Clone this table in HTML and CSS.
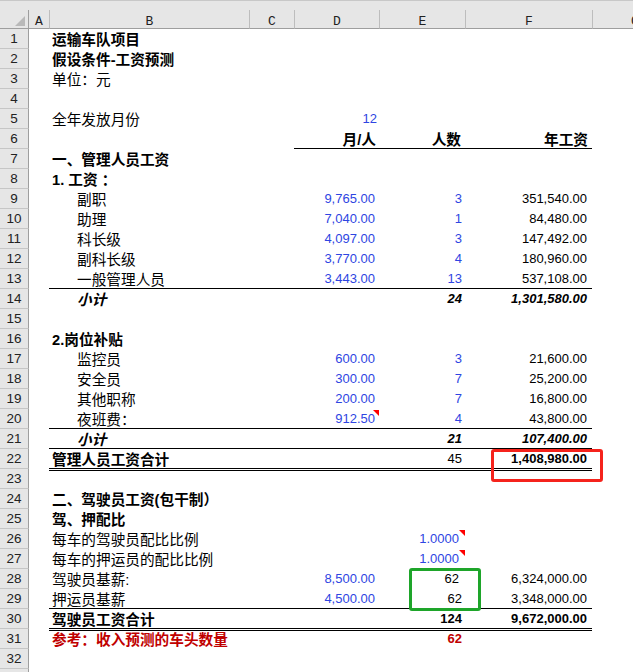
FILE: index.html
```html
<!DOCTYPE html>
<html lang="zh-CN">
<head>
<meta charset="utf-8">
<title>运输车队项目 - 工资预测</title>
<link rel="stylesheet" href="styles.css">
</head>
<body>
<div class="sheet">
  <div class="topstrip"></div>
  <div class="colhead">
    <div class="corner"><span class="tri"></span></div>
    <div class="ch">A</div>
    <div class="ch">B</div>
    <div class="ch">C</div>
    <div class="ch">D</div>
    <div class="ch">E</div>
    <div class="ch">F</div>
    <div class="ch">G</div>
  </div>
  <div class="grid">
    <div class="row"><div class="rh">1</div><div class="c"></div><div class="c b bold">运输车队项目</div><div class="c"></div><div class="c"></div><div class="c"></div><div class="c"></div><div class="c"></div></div>
    <div class="row"><div class="rh">2</div><div class="c"></div><div class="c b bold">假设条件-工资预测</div><div class="c"></div><div class="c"></div><div class="c"></div><div class="c"></div><div class="c"></div></div>
    <div class="row"><div class="rh">3</div><div class="c"></div><div class="c b">单位：元</div><div class="c"></div><div class="c"></div><div class="c"></div><div class="c"></div><div class="c"></div></div>
    <div class="row"><div class="rh">4</div><div class="c"></div><div class="c b"></div><div class="c"></div><div class="c"></div><div class="c"></div><div class="c"></div><div class="c"></div></div>
    <div class="row"><div class="rh">5</div><div class="c"></div><div class="c b">全年发放月份</div><div class="c"></div><div class="c d num blue gen">12</div><div class="c"></div><div class="c"></div><div class="c"></div></div>
    <div class="row"><div class="rh">6</div><div class="c"></div><div class="c b"></div><div class="c"></div><div class="c d hd u">月/人</div><div class="c e hd u">人数</div><div class="c f hd u">年工资</div><div class="c"></div></div>
    <div class="row"><div class="rh">7</div><div class="c"></div><div class="c b bold">一、管理人员工资</div><div class="c"></div><div class="c"></div><div class="c"></div><div class="c"></div><div class="c"></div></div>
    <div class="row"><div class="rh">8</div><div class="c"></div><div class="c b bold">1. 工资 ：</div><div class="c"></div><div class="c"></div><div class="c"></div><div class="c"></div><div class="c"></div></div>
    <div class="row"><div class="rh">9</div><div class="c"></div><div class="c b ind">副职</div><div class="c"></div><div class="c d num blue">9,765.00</div><div class="c e num blue">3</div><div class="c f num">351,540.00</div><div class="c"></div></div>
    <div class="row"><div class="rh">10</div><div class="c"></div><div class="c b ind">助理</div><div class="c"></div><div class="c d num blue">7,040.00</div><div class="c e num blue">1</div><div class="c f num">84,480.00</div><div class="c"></div></div>
    <div class="row"><div class="rh">11</div><div class="c"></div><div class="c b ind">科长级</div><div class="c"></div><div class="c d num blue">4,097.00</div><div class="c e num blue">3</div><div class="c f num">147,492.00</div><div class="c"></div></div>
    <div class="row"><div class="rh">12</div><div class="c"></div><div class="c b ind">副科长级</div><div class="c"></div><div class="c d num blue">3,770.00</div><div class="c e num blue">4</div><div class="c f num">180,960.00</div><div class="c"></div></div>
    <div class="row"><div class="rh">13</div><div class="c"></div><div class="c b ind u">一般管理人员</div><div class="c u"></div><div class="c d num blue u">3,443.00</div><div class="c e num blue u">13</div><div class="c f num u">537,108.00</div><div class="c"></div></div>
    <div class="row"><div class="rh">14</div><div class="c"></div><div class="c b ind bold it">小计</div><div class="c"></div><div class="c d"></div><div class="c e num bold it">24</div><div class="c f num bold it">1,301,580.00</div><div class="c"></div></div>
    <div class="row"><div class="rh">15</div><div class="c"></div><div class="c b"></div><div class="c"></div><div class="c"></div><div class="c"></div><div class="c"></div><div class="c"></div></div>
    <div class="row"><div class="rh">16</div><div class="c"></div><div class="c b bold">2.岗位补贴</div><div class="c"></div><div class="c"></div><div class="c"></div><div class="c"></div><div class="c"></div></div>
    <div class="row"><div class="rh">17</div><div class="c"></div><div class="c b ind">监控员</div><div class="c"></div><div class="c d num blue">600.00</div><div class="c e num blue">3</div><div class="c f num">21,600.00</div><div class="c"></div></div>
    <div class="row"><div class="rh">18</div><div class="c"></div><div class="c b ind">安全员</div><div class="c"></div><div class="c d num blue">300.00</div><div class="c e num blue">7</div><div class="c f num">25,200.00</div><div class="c"></div></div>
    <div class="row"><div class="rh">19</div><div class="c"></div><div class="c b ind">其他职称</div><div class="c"></div><div class="c d num blue">200.00</div><div class="c e num blue">7</div><div class="c f num">16,800.00</div><div class="c"></div></div>
    <div class="row"><div class="rh">20</div><div class="c"></div><div class="c b ind u">夜班费：</div><div class="c u"></div><div class="c d num blue u note">912.50</div><div class="c e num blue u">4</div><div class="c f num u">43,800.00</div><div class="c"></div></div>
    <div class="row"><div class="rh">21</div><div class="c"></div><div class="c b ind bold it u">小计</div><div class="c u"></div><div class="c d u"></div><div class="c e num bold it u">21</div><div class="c f num bold it u">107,400.00</div><div class="c"></div></div>
    <div class="row"><div class="rh">22</div><div class="c"></div><div class="c b bold uu">管理人员工资合计</div><div class="c uu"></div><div class="c d uu"></div><div class="c e num uu">45</div><div class="c f num bold uu">1,408,980.00</div><div class="c"></div></div>
    <div class="row"><div class="rh">23</div><div class="c"></div><div class="c b"></div><div class="c"></div><div class="c"></div><div class="c"></div><div class="c"></div><div class="c"></div></div>
    <div class="row"><div class="rh">24</div><div class="c"></div><div class="c b bold">二、驾驶员工资(包干制）</div><div class="c"></div><div class="c"></div><div class="c"></div><div class="c"></div><div class="c"></div></div>
    <div class="row"><div class="rh">25</div><div class="c"></div><div class="c b bold">驾、押配比</div><div class="c"></div><div class="c"></div><div class="c"></div><div class="c"></div><div class="c"></div></div>
    <div class="row"><div class="rh">26</div><div class="c"></div><div class="c b">每车的驾驶员配比比例</div><div class="c"></div><div class="c d"></div><div class="c e num blue wide note">1.0000</div><div class="c"></div><div class="c"></div></div>
    <div class="row"><div class="rh">27</div><div class="c"></div><div class="c b">每车的押运员的配比比例</div><div class="c"></div><div class="c d"></div><div class="c e num blue wide note">1.0000</div><div class="c"></div><div class="c"></div></div>
    <div class="row"><div class="rh">28</div><div class="c"></div><div class="c b">驾驶员基薪:</div><div class="c"></div><div class="c d num blue">8,500.00</div><div class="c e num wide">62</div><div class="c f num">6,324,000.00</div><div class="c"></div></div>
    <div class="row"><div class="rh">29</div><div class="c"></div><div class="c b u">押运员基薪</div><div class="c u"></div><div class="c d num blue u">4,500.00</div><div class="c e num u">62</div><div class="c f num u">3,348,000.00</div><div class="c"></div></div>
    <div class="row"><div class="rh">30</div><div class="c"></div><div class="c b bold uu">驾驶员工资合计</div><div class="c uu"></div><div class="c d uu"></div><div class="c e num bold uu">124</div><div class="c f num bold uu">9,672,000.00</div><div class="c"></div></div>
    <div class="row"><div class="rh">31</div><div class="c"></div><div class="c b bold red">参考：收入预测的车头数量</div><div class="c"></div><div class="c d"></div><div class="c e num bold red">62</div><div class="c"></div><div class="c"></div></div>
    <div class="row"><div class="rh">32</div><div class="c"></div><div class="c b"></div><div class="c"></div><div class="c"></div><div class="c"></div><div class="c"></div><div class="c"></div></div>
    <div class="row"><div class="rh"></div><div class="c"></div><div class="c b"></div><div class="c"></div><div class="c"></div><div class="c"></div><div class="c"></div><div class="c"></div></div>
  </div>
  <div class="mark mark-red"></div>
  <div class="mark mark-green"></div>
</div>
</body>
</html>
```

FILE: styles.css
```css
html, body {
  margin: 0;
  padding: 0;
  background: #ffffff;
  overflow: hidden;
}

.sheet {
  position: relative;
  width: 633px;
  height: 672px;
  overflow: hidden;
  font-family: "Liberation Sans", "Noto Sans CJK SC", sans-serif;
  font-size: 14.67px;
  color: #000;
}

.topstrip {
  height: 10px;
  background: #e6e6e6;
  box-sizing: border-box;
  border-top: 1px solid #c8c8c8;
}

.colhead,
.row {
  display: grid;
  grid-template-columns: 29px 20px 200px 45px 85px 86px 127px 85px;
  width: 677px;
}

.colhead {
  height: 19px;
  background: #e6e6e6;
}

.corner {
  position: relative;
  box-sizing: border-box;
  border-right: 1px solid #9e9e9e;
  border-bottom: 1px solid #9e9e9e;
}

.corner .tri {
  position: absolute;
  right: 3px;
  bottom: 2px;
  width: 0;
  height: 0;
  border-left: 10px solid transparent;
  border-bottom: 10px solid #b9b9b9;
}

.ch {
  box-sizing: border-box;
  height: 19px;
  padding-top: 3px;
  line-height: 18px;
  border-bottom: 1px solid #9e9e9e;
  border-left: 1px solid #bdbdbd;
  text-align: center;
  font-family: "Liberation Mono", monospace;
  font-size: 13px;
  color: #222;
}

.ch:nth-child(2) {
  border-left: none;
}

.row {
  height: 20px;
}

.rh {
  box-sizing: border-box;
  height: 20px;
  background: #e6e6e6;
  border-right: 1px solid #9e9e9e;
  border-bottom: 1px solid #c6c6c6;
  text-align: center;
  font-family: "Liberation Sans", sans-serif;
  font-size: 13.5px;
  line-height: 20px;
  color: #222;
}

.c {
  box-sizing: border-box;
  height: 20px;
  line-height: 20px;
  white-space: nowrap;
}

.b {
  padding-left: 3px;
  padding-top: 1px;
}

.b.ind {
  padding-left: 28px;
}

.bold {
  font-weight: bold;
}

.it {
  font-style: italic;
}

.num {
  font-size: 13px;
  text-align: right;
}

.d {
  padding-right: 4px;
  text-align: right;
}

.e {
  padding-right: 3px;
  text-align: right;
}

.e.wide {
  padding-right: 6px;
}

.f {
  padding-right: 5px;
  text-align: right;
}

.d.gen {
  padding-right: 2px;
}

.hd {
  font-weight: bold;
  padding-top: 1px;
}

.d.hd { padding-right: 3px; }
.e.hd { padding-right: 4px; }
.f.hd { padding-right: 4px; }

.blue {
  color: #2e45e2;
}

.red {
  color: #c00000;
}

.u {
  border-bottom: 1px solid #000;
}

.uu {
  height: 22px;
  border-bottom: 3px double #000;
}

.note {
  position: relative;
}

.note::after {
  content: "";
  position: absolute;
  top: 1px;
  right: 0;
  width: 0;
  height: 0;
  border-left: 6px solid transparent;
  border-top: 6px solid #ff0000;
}

.mark {
  position: absolute;
  box-sizing: border-box;
  border-radius: 3px;
}

.mark-red {
  left: 491px;
  top: 449px;
  width: 112px;
  height: 33px;
  border: 3px solid #f5231c;
}

.mark-green {
  left: 409px;
  top: 568px;
  width: 72px;
  height: 43px;
  border: 3px solid #1ea52a;
}
```
